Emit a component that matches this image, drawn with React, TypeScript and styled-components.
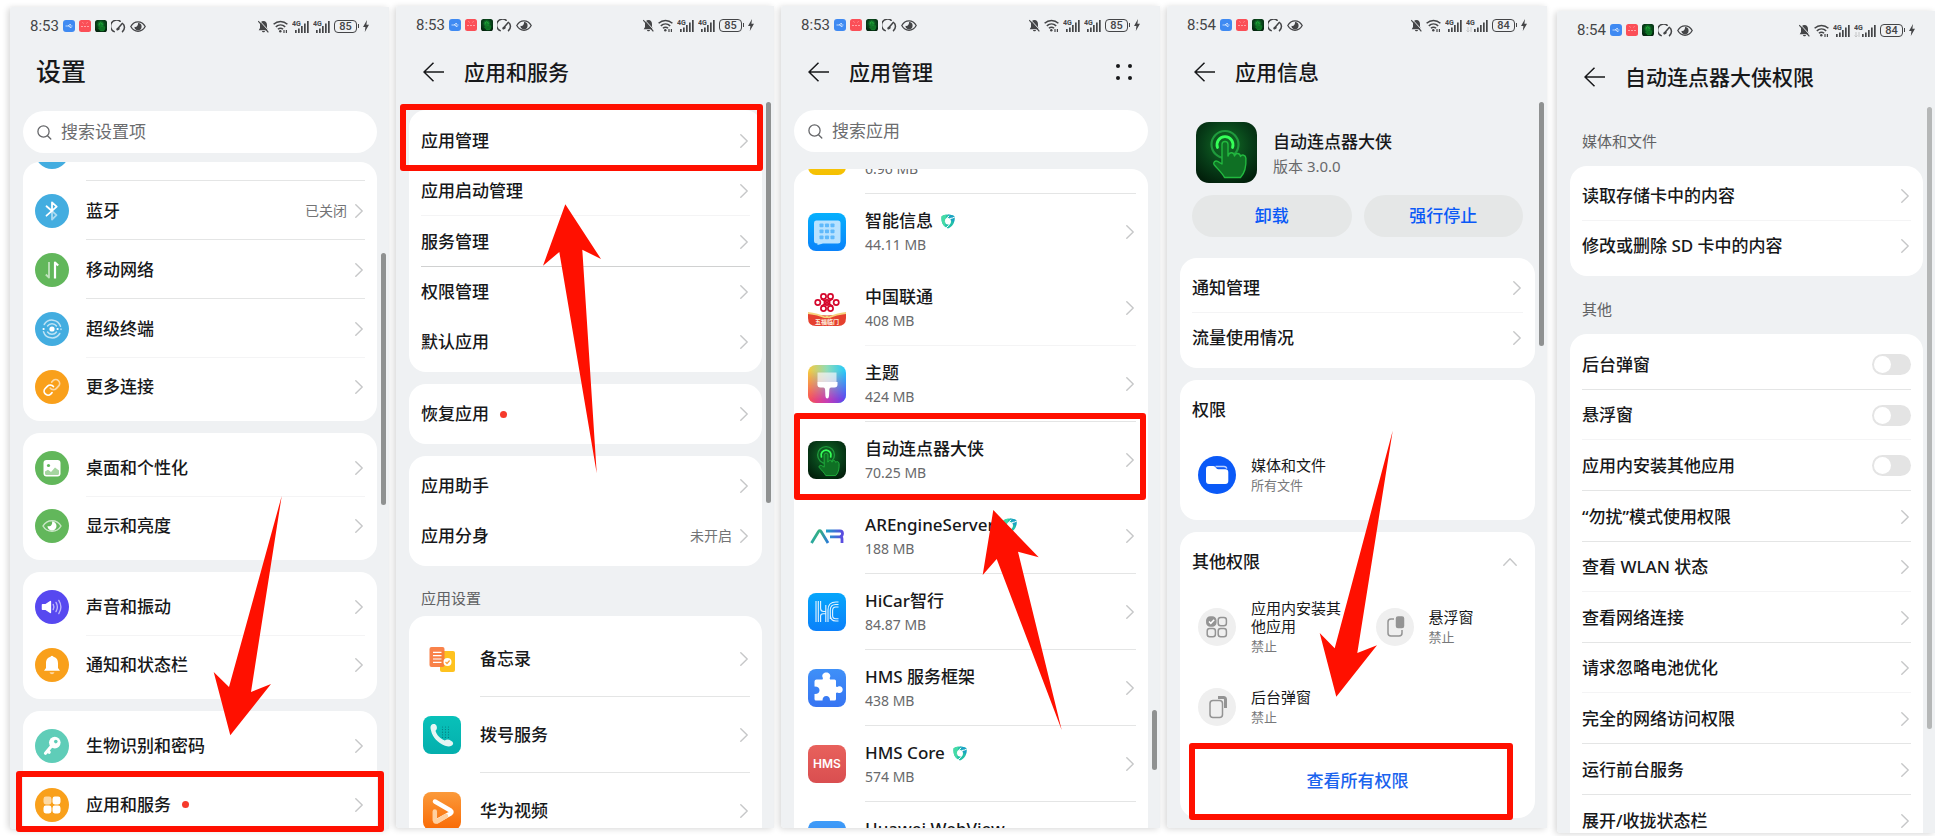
import React from 'react';
import styled, { createGlobalStyle } from 'styled-components';

const GlobalStyle = createGlobalStyle`
  * { box-sizing: border-box; }
  body {
    margin: 0;
    background: #ffffff;
    color: #17181a;
    font-family: 'Noto Sans', 'Noto Sans CJK SC', sans-serif;
    overflow: hidden;
  }
  h1, h2, p, ul { margin: 0; padding: 0; }
  ul { list-style: none; }
  a { color: inherit; text-decoration: none; }
  button, input { font-family: inherit; }
  svg { display: block; flex: none; }
`;

/* ---------- page and phone shell ---------- */

const Board = styled.main`
  display: grid;
  grid-template-columns: 379fr 378fr 379fr 380fr 381fr;
  grid-template-rows: minmax(0, 1fr);
  gap: 7px;
  height: 100vh;
  padding: 6px 0 3px 10px;
`;

const Phone = styled.section<{ $drop: number; $inset?: number }>`
  position: relative;
  min-width: 0;
  margin: ${(p) => p.$drop}px 0 ${(p) => 5 - p.$drop}px ${(p) => p.$inset ?? 0}px;
  border-radius: 2px 0 0 4px;
  box-shadow: -2px 1px 6px rgba(0, 0, 0, 0.16);
`;

const Screen = styled.div`
  display: flex;
  flex-direction: column;
  height: 100%;
  overflow: hidden;
  border-radius: inherit;
  background: #eff1f3;
`;

const StatusBar = styled.div`
  display: flex;
  flex: none;
  align-items: center;
  justify-content: space-between;
  height: 38px;
  padding: 0 20px;
  color: #444547;
`;

const StatusGroup = styled.div`
  display: flex;
  align-items: center;
  gap: 4px;
`;

const Clock = styled.span`
  font: 400 15px/20px Roboto, sans-serif;
`;

const Battery = styled.span`
  display: flex;
  align-items: center;
  justify-content: center;
  width: 23px;
  height: 13px;
  border: 1px solid #444547;
  border-radius: 4px;
  font: 500 11px/11px Roboto, sans-serif;
`;

const BatteryWrap = styled.span`
  display: flex;
  align-items: center;
  gap: 1px;
  &::after {
    content: '';
    width: 1px;
    height: 4px;
    background: #444547;
  }
`;

const TitleBar = styled.header<{ $large?: boolean }>`
  display: flex;
  flex: none;
  align-items: center;
  gap: 20px;
  height: ${(p) => (p.$large ? 54 : 58)}px;
  margin-bottom: ${(p) => (p.$large ? 12 : 0)}px;
  padding: 0 27px 2px ${(p) => (p.$large ? 26 : 27)}px;
`;

const Title = styled.h1<{ $large?: boolean }>`
  flex: 1;
  padding-bottom: 1px;
  font-size: ${(p) => (p.$large ? 25 : 21)}px;
  line-height: 32px;
  font-weight: 500;
  white-space: nowrap;
`;

const IconButton = styled.button`
  display: flex;
  padding: 0;
  border: 0;
  background: none;
  color: #17181a;
`;

const Content = styled.div<{ $top?: number }>`
  display: flex;
  flex: 1;
  flex-direction: column;
  gap: 12px;
  min-height: 0;
  padding: ${(p) => p.$top ?? 0}px 12px 0 13px;
  overflow: hidden;
  & > * { flex: none; }
`;

const Stack = styled.div<{ $gap?: number }>`
  display: flex;
  flex-direction: column;
  gap: ${(p) => p.$gap ?? 0}px;
`;

const SearchBox = styled.label`
  display: flex;
  align-items: center;
  gap: 9px;
  height: 42px;
  padding: 0 14px;
  border-radius: 21px;
  background: #ffffff;
`;

const SearchInput = styled.input`
  flex: 1;
  min-width: 0;
  padding: 0;
  border: 0;
  outline: 0;
  background: none;
  font-size: 17px;
  line-height: 24px;
  &::placeholder { color: #6c6d6f; opacity: 1; }
`;

/* ---------- cards and rows ---------- */

const Card = styled.ul`
  padding: 5px 0;
  border-radius: 17px;
  background: #ffffff;
  overflow: hidden;
`;

const ScrolledCard = styled(Card)<{ $hidden: number }>`
  padding-top: 0;
  & > :first-child { margin-top: -${(p) => p.$hidden}px; }
`;

type Divider = 'line' | 'strong' | 'soft' | 'none';
const dividerColor: Record<Divider, string> = {
  line: '#e4e5e5',
  strong: '#d0d1d1',
  soft: '#f4f4f5',
  none: 'transparent',
};

type RowSize = 'compact' | 'regular' | 'tall';
const rowHeight = (size: RowSize, divider: Divider) => {
  if (size === 'tall') return 76;
  if (size === 'regular') return divider === 'none' ? 58 : 59;
  return divider === 'line' || divider === 'strong' ? 51 : 50;
};

const RowBox = styled.div<{ $size: RowSize; $divider: Divider }>`
  display: flex;
  align-items: center;
  gap: ${(p) => (p.$size === 'tall' ? 19 : 17)}px;
  height: ${(p) => rowHeight(p.$size, p.$divider)}px;
  padding: 0 12px 0 ${(p) => (p.$size === 'tall' ? 14 : 12)}px;
`;

const RowBody = styled.span<{ $divider: Divider }>`
  display: flex;
  flex: 1;
  align-items: center;
  align-self: stretch;
  min-width: 0;
  box-shadow: inset 0 -1px ${(p) => dividerColor[p.$divider]};
`;

const Label = styled.span`
  display: flex;
  align-items: center;
  gap: 8px;
  min-height: 24px;
  font-size: 17px;
  line-height: 24px;
  font-weight: 500;
  white-space: nowrap;
`;

const LabelStack = styled.span`
  display: flex;
  flex: 1;
  flex-direction: column;
  padding-top: 2px;
`;

const Detail = styled.span`
  min-height: 24px;
  color: #68696b;
  font-size: 14px;
  line-height: 24px;
`;

const Value = styled.span`
  margin-left: auto;
  padding-right: 8px;
  color: #737476;
  font-size: 14px;
  line-height: 24px;
`;

const Dot = styled.i`
  width: 7px;
  height: 7px;
  margin-left: 3px;
  border-radius: 50%;
  background: #f63a2c;
`;

const ChevronBox = styled.span`
  margin-left: auto;
  padding-right: 2px;
  ${Value} + & { margin-left: 0; }
`;

const SectionTitle = styled.h2<{ $tight?: boolean }>`
  padding: ${(p) => (p.$tight ? '20px 12px 6px' : '21px 12px 13px')};
  color: #616264;
  font-size: 15px;
  line-height: 24px;
  font-weight: 400;
`;

const Switch = styled.input`
  appearance: none;
  width: 39px;
  height: 21px;
  margin: 0 0 0 auto;
  padding: 2px;
  border-radius: 11px;
  background: #e4e4e4;
  &::before {
    content: '';
    display: block;
    width: 17px;
    height: 17px;
    border-radius: 50%;
    background: #ffffff;
  }
`;

/* ---------- app details ---------- */

const AppHero = styled.div`
  display: flex;
  align-items: center;
  gap: 16px;
  padding: 20px 16px 0;
`;

const Version = styled(Detail)`
  font-size: 15px;
`;

const ActionBar = styled.div`
  display: grid;
  grid-template-columns: 1fr 1fr;
  gap: 12px;
  margin-bottom: 9px;
  padding: 0 12px;
`;

const PillButton = styled.button`
  height: 42px;
  padding: 0;
  border: 0;
  border-radius: 21px;
  background: #e5e7e7;
  color: #0a59f7;
  font-size: 17px;
  line-height: 24px;
  font-weight: 500;
`;

const CardHead = styled.div`
  display: flex;
  align-items: center;
  justify-content: space-between;
  height: 50px;
  padding: 0 18px 0 12px;
`;

const PermissionGrid = styled.div`
  display: grid;
  grid-template-columns: 1fr 1fr;
  grid-auto-rows: 80px;
`;

const Permission = styled.div`
  display: flex;
  align-items: center;
  gap: 15px;
  padding: 0 12px 0 18px;
`;

const PermissionName = styled.p`
  font-size: 15px;
  line-height: 18px;
  font-weight: 400;
`;

const PermissionState = styled.p`
  padding-top: 1px;
  color: #77787a;
  font-size: 13px;
  line-height: 20px;
`;

const Disc = styled.span<{ $color: string }>`
  display: flex;
  flex: none;
  width: 38px;
  height: 38px;
  border-radius: 50%;
  background: ${(p) => p.$color};
`;

const LinkButton = styled.button`
  width: 100%;
  height: 66px;
  padding: 0 0 2px;
  border: 0;
  background: none;
  color: #1a63ee;
  font-size: 17px;
  font-weight: 500;
`;

/* ---------- overlays ---------- */

const ScrollThumb = styled.div<{ $top: number; $length: number; $pale?: boolean }>`
  position: absolute;
  top: ${(p) => p.$top}px;
  right: 3px;
  width: 5px;
  height: ${(p) => p.$length}px;
  border-radius: 3px;
  background: ${(p) => (p.$pale ? '#b5b7b7' : '#8f9191')};
`;

const Highlight = styled.div<{ $left: number; $right: number; $top: number; $height: number }>`
  position: absolute;
  top: ${(p) => p.$top}px;
  left: ${(p) => p.$left}px;
  right: ${(p) => p.$right}px;
  height: ${(p) => p.$height}px;
  border: 6px solid #ff1000;
  border-radius: 3px;
  pointer-events: none;
`;

const ArrowLayer = styled.svg`
  position: absolute;
  inset: 0;
  width: 100%;
  height: 100%;
  overflow: visible;
  pointer-events: none;
`;

const Arrow = ({ points }: { points: string }) => (
  <ArrowLayer aria-hidden="true">
    <polygon points={points} fill="#ff1000" />
  </ArrowLayer>
);

/* ---------- small glyphs ---------- */

const Chevron = () => (
  <ChevronBox>
    <svg width="8" height="14" viewBox="0 0 8 14" fill="none" stroke="#c6c7c8" strokeWidth="1.4" strokeLinecap="round" strokeLinejoin="round">
      <path d="M.8.8 7.2 7 .8 13.2" />
    </svg>
  </ChevronBox>
);

const BackIcon = () => (
  <svg width="21" height="20" viewBox="0 0 21 20" fill="none" stroke="currentColor" strokeWidth="1.5" strokeLinejoin="round">
    <path d="M21 10H1M10.5.8 1 10l9.5 9.2" />
  </svg>
);

const MoreIcon = () => (
  <svg width="18" height="18" viewBox="0 0 18 18" fill="currentColor">
    <circle cx="3" cy="3" r="2" /><circle cx="15" cy="3" r="2" /><circle cx="3" cy="15" r="2" /><circle cx="15" cy="15" r="2" />
  </svg>
);

const SearchIcon = () => (
  <svg width="15" height="15" viewBox="0 0 15 15" fill="none" stroke="#66676a" strokeWidth="1.3" strokeLinecap="round">
    <circle cx="6.5" cy="6.5" r="5.6" /><path d="m10.8 11 3 3" />
  </svg>
);

const ShieldMark = () => (
  <svg width="14" height="15" viewBox="0 0 14 15" fill="none">
    <path d="M7 .4c2.600 0 4.600.7 6.400 1.900.7 5.600-1.200 10-6.400 12.300C1.800 12.300-.1 7.900.6 2.300 2.400 1.100 4.400.4 7 .4z" fill="#22c0a8" />
    <path d="M7 .4c2.600 0 4.600.7 6.400 1.900.3 2.300.1 4.400-.6 6.200L9 5z" fill="#1ba3c4" />
    <path d="M.6 2.300C2 1.300 3.700.7 5.600.5L4 7.500l.5 5.500C1.200 10.700.1 6.700.6 2.300z" fill="#45dba6" />
    <ellipse cx="7" cy="7.200" rx="2.900" ry="3.300" fill="#fff" />
    <path d="M4.300 7.500Q4.600 4 8.200 1.800M9 4.500q2.800-.2 4.800-1.500M9.300 8.500Q8 12 5 13.800" stroke="#fff" strokeWidth="1" />
  </svg>
);

const ClickerIcon = ({ size }: { size: number }) => (
  <svg width={size} height={size} viewBox="0 0 61 61">
    <defs>
      <radialGradient id={`clicker${size}`} cx="50%" cy="38%" r="68%">
        <stop offset="0" stopColor="#127026" /><stop offset=".6" stopColor="#073d18" /><stop offset="1" stopColor="#02200b" />
      </radialGradient>
    </defs>
    <rect width="61" height="61" rx="13" fill={`url(#clicker${size})`} />
    <circle cx="29" cy="22.5" r="13.5" fill="none" stroke="#1f9a3c" strokeWidth="2.2" />
    <path d="M21.500 25.500a8 8 0 1 1 15 0" fill="none" stroke="#35ff58" strokeWidth="2.8" strokeLinecap="round" />
    <path d="M26 42V22.500a3 3 0 0 1 6 0V34c1-4 6-4.500 6.500 0 1-3.500 5.500-3.500 6 .5 1.500-2.500 5.200-1.500 5.400 1.800.4 7-.4 14-5.400 19.200H28.500C26 50.500 21.500 47 18 42.500c-1-2 1-4.200 3.600-3.200L26 42z" fill="#0f7024" stroke="#22b83f" strokeWidth="1.400" strokeLinejoin="round" />
  </svg>
);

const Signal = ({ wide }: { wide?: boolean }) => {
  const shift = wide ? 5 : 0;
  return (
    <svg width={wide ? 22 : 17} height="13" viewBox={`0 0 ${wide ? 22 : 17} 13`} fill="#444547">
      <text x="0" y="6" fontSize="7" fontWeight="700" fontFamily="Roboto, sans-serif">4G</text>
      <rect x={3 + shift} y="10" width="1.7" height="3" /><rect x={6 + shift} y="8.5" width="1.7" height="4.5" />
      <rect x={9 + shift} y="6" width="1.7" height="7" /><rect x={12 + shift} y="3.5" width="1.7" height="9.5" />
      <rect x={15 + shift} y="1" width="1.7" height="12" />
      {wide && <path d="M2 8v5M.5 11.500 2 13l1.500-1.500M5 13V8" fill="none" stroke="#c4c5c6" />}
    </svg>
  );
};

const Status = ({ time, battery, wide }: { time: string; battery: number; wide?: boolean }) => (
  <StatusBar>
    <StatusGroup>
      <Clock>{time}</Clock>
      <svg width="12" height="12" viewBox="0 0 12 12">
        <rect width="12" height="12" rx="3" fill="#3f8af2" />
        <path d="M2.500 6h7M5 6l1.500-1.500H8M6 6l1 1.500h1.500" stroke="#dcebff" fill="none" strokeWidth=".8" />
      </svg>
      <svg width="12" height="12" viewBox="0 0 12 12">
        <rect width="12" height="12" rx="2.5" fill="#fb4f57" />
        <path d="M2 6.500h2M5 6.500h2M8 6.500h2M3.500 2.500l1 .8M8.500 2.500l-1 .8" stroke="#ffb9bb" strokeWidth=".8" />
      </svg>
      <ClickerIcon size={12} />
      <svg width="15" height="13" viewBox="0 0 15 13" fill="none" stroke="#444547" strokeWidth="1.5" strokeLinecap="round">
        <path d="M3.200 11.600a6 6 0 1 1 6-10.300M12.400 4.200a6 6 0 0 1-.9 7.400M6.500 9l4.700-5.600" /><path d="M6.500 9.300l1-.6" strokeWidth="2.4" />
      </svg>
      <svg width="16" height="13" viewBox="0 0 16 13" fill="none" stroke="#444547" strokeWidth="1.3">
        <path d="M.8 6.500C4.200.2 11.800.2 15.200 6.500 11.800 12.800 4.200 12.800.8 6.500z" />
        <path d="M8 3a3.600 3.600 0 1 1-3.600 3.800C6.400 7.600 8.400 5.600 8 3z" fill="#444547" stroke="none" />
      </svg>
    </StatusGroup>
    <StatusGroup>
      <svg width="11" height="13" viewBox="0 0 11 13" fill="#444547">
        <path d="M5.500 1C7.800 1 9 2.800 9 5v3l1.300 2.200H.7L2 8V5c0-2.200 1.200-4 3.500-4zM4 11h3c0 .8-.7 1.300-1.500 1.300S4 11.800 4 11z" />
        <path d="M1.200.4 11 11" stroke="#eff1f3" /><path d="M.2 1.200 10.400 12.400" stroke="#444547" strokeWidth="1.200" />
      </svg>
      <svg width="15" height="13" viewBox="0 0 15 13" fill="none" stroke="#444547" strokeWidth="1.5">
        <path d="M.6 4.200c4-3.700 9.800-3.700 13.800 0M2.800 6.900c2.800-2.500 6.600-2.500 9.400 0M4.900 9.300c1.600-1.400 3.600-1.400 5.200 0" />
        <circle cx="7.3" cy="11.3" r="1.2" fill="#444547" stroke="none" /><path d="M11 10V13M13.400 10V13" strokeWidth="1.200" />
      </svg>
      <Signal />
      <Signal wide={wide} />
      <BatteryWrap><Battery>{battery}</Battery></BatteryWrap>
      <svg width="6" height="12" viewBox="0 0 6 12" fill="#444547"><path d="M4 0 0 7h2.400L1.800 12 6 4.800H3.400z" /></svg>
    </StatusGroup>
  </StatusBar>
);

/* ---------- round settings icons, 34 x 34 ---------- */

const SKY = '#43ade0';
const LEAF = '#62b75b';
const AMBER = '#f9a01b';

const Round = ({ color, children }: { color: string; children?: React.ReactNode }) => (
  <svg width="34" height="34" viewBox="-17 -17 34 34" fill="none" stroke="#fff" strokeWidth="1.5" strokeLinecap="round" strokeLinejoin="round">
    <circle r="17" fill={color} stroke="none" />
    {children}
  </svg>
);

const glyphs = {
  wifi: <Round color={SKY} />,
  bluetooth: (
    <Round color={SKY}>
      <path d="M0 0V-8.500L4.700-4.300-5.500 4.700M-5.500-4.700 0 0" strokeWidth="1.8" />
      <path d="M0 1V8.500L4.500 4.200 1 .8" opacity=".55" strokeWidth="1.8" />
    </Round>
  ),
  mobile: (
    <Round color={LEAF}>
      <path d="M-3-8V7.500L-6.200 4.500" opacity=".6" strokeWidth="1.8" strokeLinecap="butt" />
      <path d="M3 8.500V-7.500L6.200-4.500" strokeWidth="2.2" strokeLinecap="butt" />
    </Round>
  ),
  hyper: (
    <Round color={SKY}>
      <circle r="2.6" fill="#fff" stroke="none" />
      <path d="M-4.500-3A5.500 5.500 0 0 1 4.500-3M-4.500 3A5.500 5.500 0 0 0 4.500 3" opacity=".65" />
      <path d="M-7.800-4.500A9 9 0 0 1 8.500-2.700M-8.500 2.700A9 9 0 0 0 7.800 4.500M9 0V.5" opacity=".65" />
      <circle cx="-8.4" r="1.1" fill="#fff" stroke="none" /><circle cx="5.6" r="1.1" fill="#fff" stroke="none" />
    </Round>
  ),
  link: (
    <Round color={AMBER}>
      <g transform="translate(-9.5 -9) scale(.78)" strokeWidth="2.2">
        <path d="M10 13a5 5 0 0 0 7.540.540l3-3a5 5 0 0 0-7.070-7.070l-1.720 1.710" opacity=".6" />
        <path d="M14 11a5 5 0 0 0-7.540-.540l-3 3a5 5 0 0 0 7.070 7.070l1.710-1.710" />
      </g>
    </Round>
  ),
  desktop: (
    <Round color={LEAF}>
      <rect x="-8.5" y="-8" width="17" height="16.5" rx="3" fill="#fff" stroke="none" />
      <circle cx="-3.5" cy="-2.5" r="1.6" fill={LEAF} stroke="none" />
      <path d="M-7 3.500-4 1.800-1 4 3-.5 7 2.500V5.500Q7 7 5.500 7H-5.500Q-7 7-7 5.500z" fill="#a5d5a0" stroke="none" />
    </Round>
  ),
  display: (
    <Round color={LEAF}>
      <path d="M-9 0C-5-7 5-7 9 0 5 7-5 7-9 0z" opacity=".65" />
      <path d="M0-4.500A4.500 4.500 0 1 1-4.500 0C-1.500 1.200.8-1.500 0-4.500z" fill="#fff" stroke="none" />
    </Round>
  ),
  sound: (
    <Round color="#5748f0">
      <path d="M-9.500-2.200h3L-1.600-5.400V5.400L-6.500 2.200H-9.500z" fill="#fff" />
      <path d="M1.200-2.600Q2.600 0 1.200 2.600M4-4.600Q6.800 0 4 4.600M6.800-6.600Q11 0 6.800 6.600" opacity=".6" strokeWidth="1.4" />
    </Round>
  ),
  bell: (
    <Round color={AMBER}>
      <path d="M0-9.200C1-9.200 1.400-8.200 1.400-8.200 5-7.400 6-4.500 6-1.500V3L8 5.800H-8L-6 3V-1.500C-6-4.500-5-7.400-1.400-8.200-1.400-8.200-1-9.200 0-9.200z" fill="#fff" stroke="none" />
      <path d="M-2.500 7.200H2.500Q1.800 9.200 0 9.200-1.800 9.200-2.500 7.200z" fill="#fdd9a4" stroke="none" />
    </Round>
  ),
  key: (
    <Round color="#5fcdb8">
      <circle cx="2.8" cy="-3.4" r="5.8" fill="#fff" stroke="none" />
      <circle cx="3.8" cy="-4.4" r="1.8" fill="#5fcdb8" stroke="none" />
      <path d="M0-.5-6.500 7.200M-4.200 5-2.800 6.200" strokeWidth="3.2" />
    </Round>
  ),
  apps: (
    <Round color={AMBER}>
      <g stroke="none" fill="#fff">
        <rect x="-8.5" y="-8.5" width="8" height="8" rx="2.4" opacity=".6" /><rect x=".5" y="-8.5" width="8" height="8" rx="2.4" />
        <rect x="-8.5" y=".5" width="8" height="8" rx="2.4" /><rect x=".5" y=".5" width="8" height="8" rx="2.4" />
      </g>
    </Round>
  ),
};

/* ---------- square app icons, 38 x 38 ---------- */

const Tile = ({ id, from, to, children }: { id: string; from: string; to: string; children?: React.ReactNode }) => (
  <svg width="38" height="38" viewBox="0 0 38 38" fill="none">
    <defs>
      <linearGradient id={id} x1="0" y1="0" x2="0" y2="1"><stop offset="0" stopColor={from} /><stop offset="1" stopColor={to} /></linearGradient>
    </defs>
    <rect width="38" height="38" rx="8" fill={`url(#${id})`} />
    {children}
  </svg>
);

const MemoIcon = () => (
  <svg width="38" height="38" viewBox="0 0 38 38" fill="none">
    <rect x="17" y="11" width="15" height="21" rx="2" fill="#fec21f" />
    <rect x="6.5" y="7" width="15" height="20" rx="2" fill="#f9783c" fillOpacity=".93" />
    <path d="M10 12.300h8.500M10 15.600h8.500M10 19h8.500M10 22.300h8.500" stroke="#fff" strokeWidth="1.2" />
    <circle cx="24.5" cy="22" r="4" fill="#fff" /><path d="m22.500 22 1.500 1.500 2.600-3" stroke="#f9a03c" strokeWidth="1.2" />
  </svg>
);

const DialIcon = () => (
  <Tile id="dial" from="#08c1b9" to="#04afad">
    <g fill="#067f80">
      {[0, 1, 2, 3, 4].map((r) => [0, 1, 2].map((c) => <circle key={`${r}${c}`} cx={19.5 + c * 3} cy={11 + r * 2.6} r=".6" />))}
    </g>
    <path d="M8 9.500c1.500-2 4.500-2 5.500.2.800 2 .5 3.700-1 5 1 4 4.800 8 9.300 9.900 1.900-1.400 3.800-1.300 6.200.1 2.500 1.500 2.600 3 1.500 4.400-1.500 1.700-4.500 1.600-7.500.6C14.500 26.800 9.500 21 8 14.500c-.5-2-.8-3.700 0-5z" fill="#e6f6f4" />
  </Tile>
);

const VideoIcon = () => (
  <Tile id="video" from="#fb9a3a" to="#f96a05">
    <path d="M12 9.500 27.500 18.500q2 1.500 0 3L14 29" stroke="#fff" strokeWidth="4.5" strokeLinecap="round" strokeLinejoin="round" />
    <path d="M11.800 19.500V28q.5 2.500 3 1L23 24" stroke="#ffd0a0" strokeWidth="4.5" strokeLinecap="round" />
  </Tile>
);

const MessageIcon = () => (
  <Tile id="message" from="#06b0fd" to="#0a82fa">
    <path d="M8 7.500h22q2.500 0 2.500 2.500v18q0 2.500-2.500 2.500H15L9.500 32v-1.500Q6 30.500 6 28V10q0-2.500 2-2.500z" fill="#b8e2ff" />
    <g fill="#5fb9fb">
      {[10.5, 16.5, 22.5].map((y) => [11.5, 17, 22.5].map((x) => <rect key={`${x}${y}`} x={x} y={y} width="4" height="3.8" rx=".8" />))}
    </g>
  </Tile>
);

const UnicomIcon = () => (
  <svg width="38" height="38" viewBox="0 0 38 38" fill="none">
    <g stroke="#d5072c" strokeWidth="1.7">
      {[[15.5, 7.5], [22.5, 7.5], [19, 13.5], [9.8, 13.5], [28.2, 13.5], [15.5, 19.5], [22.5, 19.5]].map(([x, y]) => (
        <circle key={`${x}-${y}`} cx={x} cy={y} r="2.6" />
      ))}
      <path d="m13 9.500 12 8M25 9.500l-12 8" />
    </g>
    <path d="M0 24q19 5 38 0v5q0 8-8 8H8q-8 0-8-8z" fill="#e5402f" />
    <path d="M0 23q10 1 17 4.500l2-.8 2 .8Q28 24 38 23v2q-10 1-16 4h-6Q10 26 0 25z" fill="#f6d27c" />
    <text x="19" y="35" textAnchor="middle" fontSize="6" fontWeight="700" fill="#fff3e0" fontFamily="'Noto Sans CJK SC', sans-serif">五福临门</text>
  </svg>
);

const ThemeIcon = () => (
  <svg width="38" height="38" viewBox="0 0 38 38">
    <defs>
      <linearGradient id="themeTop" x1="0" y1="0" x2="1" y2="0"><stop offset="0" stopColor="#f9c93a" /><stop offset=".5" stopColor="#8fdcb8" /><stop offset="1" stopColor="#22c8fb" /></linearGradient>
      <linearGradient id="themeLow" x1="0" y1="0" x2="1" y2="0"><stop offset="0" stopColor="#fb4f55" /><stop offset=".5" stopColor="#c63db4" /><stop offset="1" stopColor="#5a46f2" /></linearGradient>
      <linearGradient id="themeFade" x1="0" y1="0" x2="0" y2="1"><stop offset=".15" stopColor="#fff" stopOpacity="0" /><stop offset=".9" stopColor="#fff" /></linearGradient>
      <mask id="themeMask"><rect width="38" height="38" fill="url(#themeFade)" /></mask>
    </defs>
    <rect width="38" height="38" rx="8" fill="url(#themeTop)" />
    <rect width="38" height="38" rx="8" fill="url(#themeLow)" mask="url(#themeMask)" />
    <path d="M9.500 7.500h19v10h-19z" fill="#fff" fillOpacity=".65" />
    <path d="M9.500 17h20v2.500q0 3-3 3h-3.500q-1.500 0-1.700 2l-.3 6.500q-.3 2.500-1.800 2.500t-1.800-2.500l-.3-6.500q-.2-2-1.700-2h-3q-3 0-3-3z" fill="#fff" />
  </svg>
);

const ArIcon = () => (
  <svg width="38" height="38" viewBox="0 0 38 38" fill="none">
    <defs>
      <linearGradient id="arLeft"><stop offset="0" stopColor="#2aa8a0" /><stop offset=".5" stopColor="#35b07f" /><stop offset="1" stopColor="#2a7ad8" /></linearGradient>
      <linearGradient id="arRight"><stop offset="0" stopColor="#1ba0c8" /><stop offset="1" stopColor="#5b4be0" /></linearGradient>
    </defs>
    <path d="M3.500 26 10.500 14.500q1.300-1.800 2.600 0L20 26" stroke="url(#arLeft)" strokeWidth="2.8" />
    <path d="M18 14h14q2.500 0 2.500 2.500T32 19.800H22M32 19.800q2 0 2 2V26" stroke="url(#arRight)" strokeWidth="2.8" />
  </svg>
);

const HiCarIcon = () => (
  <Tile id="hicar" from="#06a6fb" to="#0b80fa">
    <g stroke="#e5f5ff" strokeWidth="1.1">
      <path d="M8 8v21M10.300 8v21M12.600 8v7.500q0 3 3 3h2.200M12.600 29v-6q0-2.200 2.500-2.200h2.700M17.800 12v17M20 29V17q0-8 8-8h2.500M22.300 26v-9q0-5.500 5.500-5.500h2.700M30.500 14h-2.700q-3.200 0-3.200 3.500v5q0 3.300 3.200 3.300h2.700M22.300 22q0 6 5.500 6h2.700" />
    </g>
  </Tile>
);

const PuzzleIcon = () => (
  <Tile id="puzzle" from="#3f90f8" to="#3674f2">
    <path d="M8.500 10.500h6q1-1-.2-3c-.3-2 1.500-4 4-4s4.300 2 4 4q-1.200 2-.2 3h4.400q1.500 0 1.500 1.500v5.500q1 .9 2.700-.2c2.300-.5 4 1 4 3.200s-1.700 4-4 3.500Q29 22.800 28 24v6q0 1.500-1.500 1.500H22q0-4.500-3.700-4.500t-3.800 4.500H8q-1.500 0-1.500-1.500v-5q5 .2 5-3.700t-5-3.800V12.500q0-2 2-2z" fill="#fff" />
  </Tile>
);

const HmsIcon = () => (
  <Tile id="hms" from="#e8615c" to="#d94e50">
    <text x="19" y="23" textAnchor="middle" fontSize="12" fontWeight="600" fill="#fff" fontFamily="Inter, sans-serif">HMS</text>
  </Tile>
);

/* ---------- rows ---------- */

interface RowProps {
  label?: string;
  icon?: React.ReactNode;
  detail?: string;
  value?: string;
  dot?: boolean;
  shield?: boolean;
  size?: RowSize;
  divider?: Divider;
}

const Row = ({ label, icon, detail, value, dot, shield, size = 'compact', divider = 'line' }: RowProps) => (
  <li>
    <RowBox as="a" href="#" $size={size} $divider={divider}>
      {icon}
      <RowBody $divider={divider}>
        {detail !== undefined ? (
          <LabelStack>
            <Label>{label}{shield && <ShieldMark />}</Label>
            <Detail>{detail}</Detail>
          </LabelStack>
        ) : (
          <Label>{label}{dot && <Dot />}</Label>
        )}
        {value && <Value>{value}</Value>}
        <Chevron />
      </RowBody>
    </RowBox>
  </li>
);

const SwitchRow = ({ label, divider = 'line' }: { label: string; divider?: Divider }) => (
  <li>
    <RowBox as="label" $size="compact" $divider={divider}>
      <RowBody $divider={divider}>
        <Label>{label}</Label>
        <Switch type="checkbox" role="switch" />
      </RowBody>
    </RowBox>
  </li>
);

const SubHeader = ({ title, more }: { title: string; more?: boolean }) => (
  <TitleBar>
    <IconButton aria-label="返回"><BackIcon /></IconButton>
    <Title>{title}</Title>
    {more && <IconButton aria-label="更多"><MoreIcon /></IconButton>}
  </TitleBar>
);

const Search = ({ hint }: { hint: string }) => (
  <SearchBox>
    <SearchIcon />
    <SearchInput type="text" placeholder={hint} />
  </SearchBox>
);

/* ---------- screens ---------- */

const SettingsPhone = () => (
  <Phone $drop={1}>
    <Screen>
      <Status time="8:53" battery={85} />
      <TitleBar $large><Title $large>设置</Title></TitleBar>
      <Content>
        <Stack $gap={9}>
          <Search hint="搜索设置项" />
          <ScrolledCard $hidden={40}>
            <Row size="regular" icon={glyphs.wifi} />
            <Row size="regular" icon={glyphs.bluetooth} label="蓝牙" value="已关闭" />
            <Row size="regular" icon={glyphs.mobile} label="移动网络" />
            <Row size="regular" icon={glyphs.hyper} label="超级终端" divider="soft" />
            <Row size="regular" icon={glyphs.link} label="更多连接" divider="none" />
          </ScrolledCard>
        </Stack>
        <Card>
          <Row size="regular" icon={glyphs.desktop} label="桌面和个性化" divider="soft" />
          <Row size="regular" icon={glyphs.display} label="显示和亮度" divider="none" />
        </Card>
        <Card>
          <Row size="regular" icon={glyphs.sound} label="声音和振动" divider="soft" />
          <Row size="regular" icon={glyphs.bell} label="通知和状态栏" divider="none" />
        </Card>
        <Card>
          <Row size="regular" icon={glyphs.key} label="生物识别和密码" />
          <Row size="regular" icon={glyphs.apps} label="应用和服务" dot />
        </Card>
      </Content>
    </Screen>
    <ScrollThumb $top={246} $length={252} />
    <Highlight $left={6} $right={5} $top={764} $height={61} />
    <Arrow points="203.7,665 219,680 271.7,489 241,685 261,677 220.3,728.3" />
  </Phone>
);

const ServicesPhone = () => (
  <Phone $drop={0}>
    <Screen>
      <Status time="8:53" battery={85} />
      <SubHeader title="应用和服务" />
      <Content $top={8}>
        <Card>
          <Row label="应用管理" />
          <Row label="应用启动管理" divider="soft" />
          <Row label="服务管理" divider="strong" />
          <Row label="权限管理" divider="none" />
          <Row label="默认应用" divider="none" />
        </Card>
        <Card><Row label="恢复应用" dot divider="none" /></Card>
        <Stack>
          <Card>
            <Row label="应用助手" divider="none" />
            <Row label="应用分身" value="未开启" divider="none" />
          </Card>
          <SectionTitle $tight>应用设置</SectionTitle>
          <Card>
            <Row size="tall" icon={<MemoIcon />} label="备忘录" />
            <Row size="tall" icon={<DialIcon />} label="拨号服务" />
            <Row size="tall" icon={<VideoIcon />} label="华为视频" />
          </Card>
        </Stack>
      </Content>
    </Screen>
    <ScrollThumb $top={96} $length={401} />
    <Highlight $left={4} $right={11} $top={98} $height={67} />
    <Arrow points="169.3,198.3 147,259.7 163.3,246 200.7,467.3 186.3,243.7 205,253" />
  </Phone>
);

const AppsPhone = () => (
  <Phone $drop={0}>
    <Screen>
      <Status time="8:53" battery={85} />
      <SubHeader title="应用管理" more />
      <Content $top={8}>
        <Stack $gap={17}>
          <Search hint="搜索应用" />
          <ScrolledCard $hidden={51}>
            <Row size="tall" icon={<Tile id="first" from="#f9cf2c" to="#f5c000" />} detail="6.96 MB" />
            <Row size="tall" icon={<MessageIcon />} label="智能信息" shield detail="44.11 MB" divider="none" />
            <Row size="tall" icon={<UnicomIcon />} label="中国联通" detail="408 MB" divider="soft" />
            <Row size="tall" icon={<ThemeIcon />} label="主题" detail="424 MB" />
            <Row size="tall" icon={<ClickerIcon size={38} />} label="自动连点器大侠" detail="70.25 MB" />
            <Row size="tall" icon={<ArIcon />} label="AREngineServer" shield detail="188 MB" />
            <Row size="tall" icon={<HiCarIcon />} label="HiCar智行" detail="84.87 MB" />
            <Row size="tall" icon={<PuzzleIcon />} label="HMS 服务框架" detail="438 MB" />
            <Row size="tall" icon={<HmsIcon />} label="HMS Core" shield detail="574 MB" />
            <Row size="tall" icon={<Tile id="webview" from="#3f9cf8" to="#2b7cf0" />} label="Huawei WebView" detail="" />
          </ScrolledCard>
        </Stack>
      </Content>
    </Screen>
    <ScrollThumb $top={704} $length={60} />
    <Highlight $left={13} $right={14} $top={407} $height={87} />
    <Arrow points="212.3,504 257.7,551.3 237,545.7 280.7,724 215.7,553 201.7,569" />
  </Phone>
);

const DetailsPhone = () => (
  <Phone $drop={0}>
    <Screen>
      <Status time="8:54" battery={84} wide />
      <SubHeader title="应用信息" />
      <Content>
        <AppHero>
          <ClickerIcon size={61} />
          <LabelStack>
            <Label>自动连点器大侠</Label>
            <Version>版本 3.0.0</Version>
          </LabelStack>
        </AppHero>
        <ActionBar>
          <PillButton>卸载</PillButton>
          <PillButton>强行停止</PillButton>
        </ActionBar>
        <Card>
          <Row label="通知管理" divider="soft" />
          <Row label="流量使用情况" divider="none" />
        </Card>
        <Card as="section">
          <CardHead><Label>权限</Label></CardHead>
          <PermissionGrid>
            <Permission>
              <Disc $color="#0a59f7">
                <svg width="38" height="38" viewBox="0 0 38 38" fill="none">
                  <path d="M8 13q0-3 3-3h4q1.500 0 2.500 1.200l1 1.300q.6.800 1.800.8h7q3 0 3 3V25q0 3-3 3H11q-3 0-3-3z" fill="#fff" />
                  <path d="M17.500 10.500h8.500q2.500.2 2.800 2.200" stroke="#bcd2ff" strokeWidth="1.3" />
                </svg>
              </Disc>
              <div><PermissionName>媒体和文件</PermissionName><PermissionState>所有文件</PermissionState></div>
            </Permission>
          </PermissionGrid>
        </Card>
        <Card as="section">
          <CardHead>
            <Label>其他权限</Label>
            <IconButton aria-label="收起">
              <svg width="14" height="8" viewBox="0 0 14 8" fill="none" stroke="#c6c7c8" strokeWidth="1.4" strokeLinecap="round" strokeLinejoin="round"><path d="M.8 7.200 7 .8l6.200 6.400" /></svg>
            </IconButton>
          </CardHead>
          <PermissionGrid>
            <Permission>
              <Disc $color="#efefef">
                <svg width="38" height="38" viewBox="0 0 38 38" fill="none" stroke="#949494" strokeWidth="1.5">
                  <rect x="8.8" y="9" width="9" height="9" rx="3.5" fill="#949494" /><path d="m11 13.500 1.800 1.800 3.400-3.600" stroke="#fff" />
                  <rect x="20.2" y="9.5" width="8.2" height="8.2" rx="2.5" /><rect x="9.2" y="20.5" width="8.2" height="8.2" rx="2.5" /><rect x="20.2" y="20.5" width="8.2" height="8.2" rx="2.5" />
                </svg>
              </Disc>
              <div><PermissionName>应用内安装其他应用</PermissionName><PermissionState>禁止</PermissionState></div>
            </Permission>
            <Permission>
              <Disc $color="#efefef">
                <svg width="38" height="38" viewBox="0 0 38 38" fill="none" stroke="#949494" strokeWidth="1.5">
                  <path d="M18 11h-3q-3 0-3 3v11q0 3 3 3h8q3 0 3-3v-3" /><rect x="20.5" y="9" width="7" height="10.5" rx="1.5" fill="#949494" />
                </svg>
              </Disc>
              <div><PermissionName>悬浮窗</PermissionName><PermissionState>禁止</PermissionState></div>
            </Permission>
            <Permission>
              <Disc $color="#efefef">
                <svg width="38" height="38" viewBox="0 0 38 38" fill="none" stroke="#949494" strokeWidth="1.5">
                  <rect x="12" y="12.5" width="12.5" height="17" rx="3" /><path d="M20 9.500h5.500q2 0 2 2V20" strokeWidth="3" />
                </svg>
              </Disc>
              <div><PermissionName>后台弹窗</PermissionName><PermissionState>禁止</PermissionState></div>
            </Permission>
          </PermissionGrid>
          <LinkButton>查看所有权限</LinkButton>
        </Card>
      </Content>
    </Screen>
    <ScrollThumb $top={96} $length={244} />
    <Highlight $left={22} $right={34} $top={737} $height={77} />
    <Arrow points="225.7,424.7 167.7,642.3 152.7,627 169.3,690.7 210,639.3 190.3,647" />
  </Phone>
);

const PermissionsPhone = () => (
  <Phone $drop={5} $inset={3}>
    <Screen>
      <Status time="8:54" battery={84} wide />
      <SubHeader title="自动连点器大侠权限" />
      <Content $top={1}>
        <Stack>
          <SectionTitle>媒体和文件</SectionTitle>
          <Card>
            <Row label="读取存储卡中的内容" divider="soft" />
            <Row label="修改或删除 SD 卡中的内容" divider="none" />
          </Card>
          <SectionTitle>其他</SectionTitle>
          <Card>
            <SwitchRow label="后台弹窗" />
            <SwitchRow label="悬浮窗" divider="soft" />
            <SwitchRow label="应用内安装其他应用" />
            <Row label="“勿扰”模式使用权限" />
            <Row label="查看 WLAN 状态" divider="soft" />
            <Row label="查看网络连接" />
            <Row label="请求忽略电池优化" divider="soft" />
            <Row label="完全的网络访问权限" />
            <Row label="运行前台服务" />
            <Row label="展开/收拢状态栏" />
          </Card>
        </Stack>
      </Content>
    </Screen>
    <ScrollThumb $top={96} $length={622} $pale />
  </Phone>
);

export default function App() {
  return (
    <>
      <GlobalStyle />
      <Board>
        <SettingsPhone />
        <ServicesPhone />
        <AppsPhone />
        <DetailsPhone />
        <PermissionsPhone />
      </Board>
    </>
  );
}
